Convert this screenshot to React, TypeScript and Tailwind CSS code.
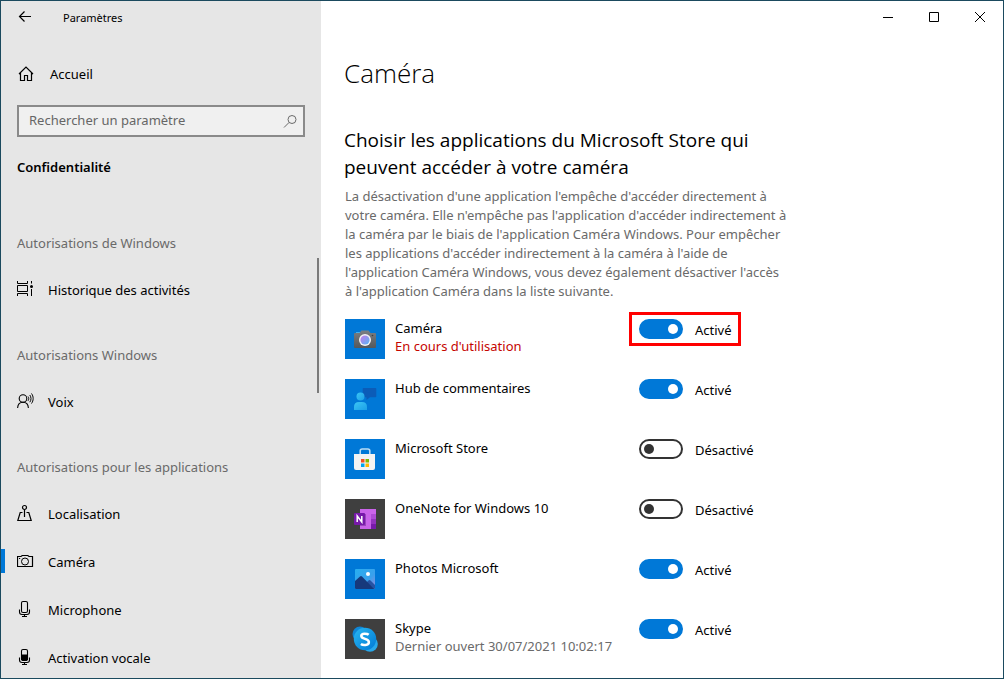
import { useState } from "react";
import type { ReactNode } from "react";
import { clsx } from "clsx";

interface IconProps {
  children: ReactNode;
}

function LineIcon({ children }: IconProps) {
  return (
    <svg
      className="h-[18px] w-[18px] shrink-0"
      viewBox="0 0 18 18"
      fill="none"
      stroke="currentColor"
      strokeWidth="1"
      aria-hidden="true"
    >
      {children}
    </svg>
  );
}

function AppTile({ children, dark = false }: IconProps & { dark?: boolean }) {
  return (
    <svg
      className={clsx("h-10 w-10 shrink-0", dark ? "bg-[#3f3f3f]" : "bg-[#0078d7]")}
      viewBox="0 0 40 40"
      aria-hidden="true"
    >
      {children}
    </svg>
  );
}

const HomeIcon = () => (
  <LineIcon>
    <path d="M2 10 9 3l7 7M3.5 9v7.5h4v-5h3v5h4V9" strokeWidth="1.2" />
  </LineIcon>
);

const HistoryIcon = () => (
  <LineIcon>
    <path d="M.5 1v2.5h10V1M.5 16v-2.5h10V16M.5 5.5h10v6H.5zM14.5 1v2.5M14.5 9v7" />
    <circle cx="14.5" cy="6.5" r="1.5" fill="currentColor" stroke="none" />
  </LineIcon>
);

const VoiceIcon = () => (
  <LineIcon>
    <circle cx="6" cy="6.5" r="3.8" strokeWidth="1.1" />
    <path d="M.6 16c.2-3.4 2.3-5.7 5.400-5.700s5.200 2.300 5.400 5.700" strokeWidth="1.1" />
    <path d="M11 4.500c1 1.300 1 3 0 4.300M12.800 3c1.600 2.200 1.600 5 0 7.200M14.500 1.500c2.200 3 2.200 7 0 10" />
  </LineIcon>
);

const LocationIcon = () => (
  <LineIcon>
    <circle cx="7.500" cy="3.500" r="2" strokeWidth="1.2" />
    <path d="M7.500 5.500V13M5.500 8.500H3.200L.8 16.500h13.400L11.800 8.500H9.500" strokeWidth="1.2" />
  </LineIcon>
);

const CameraIcon = () => (
  <LineIcon>
    <path d="M.5 4.500h3.500l1.200-1h5.600l1.200 1h3.500v10H.5z" strokeWidth="1.2" />
    <circle cx="8" cy="9.500" r="3.500" />
    <path d="M2 6.500h1.200" />
  </LineIcon>
);

const MicIcon = ({ filled = false }: { filled?: boolean }) => (
  <LineIcon>
    <rect x="4.500" y="1.500" width="6" height="11" rx="1.500" strokeWidth="1.100" />
    {filled && <path d="M4.500 7h6v4.500l-1 1h-4l-1-1z" fill="currentColor" />}
    <path d="M2.500 9.500v2.500c0 1.500 1 2.500 2.500 2.500h5c1.500 0 2.500-1 2.500-2.500V9.500M7.500 14.500v2M5 16.500h5" strokeWidth="1.100" />
  </LineIcon>
);

const CameraTile = () => (
  <AppTile>
    <defs>
      <linearGradient id="cam-body" x1="0" y1="0" x2="0" y2="1">
        <stop offset="0" stopColor="#7b7f83" />
        <stop offset="1" stopColor="#55585b" />
      </linearGradient>
      <linearGradient id="cam-lens" x1="0" y1="0" x2="1" y2="1">
        <stop offset="0" stopColor="#c77bea" />
        <stop offset="1" stopColor="#55b6f5" />
      </linearGradient>
    </defs>
    <path d="M11 14.500V13h4v1.500z" fill="#3fb0f0" />
    <path d="M10 14h4.500l2-2.500h7l2 2.500H30q1 0 1 1v13q0 1-1 1H10q-1 0-1-1V15q0-1 1-1z" fill="url(#cam-body)" />
    <circle cx="20" cy="21" r="6" fill="#f4f4f6" />
    <circle cx="20" cy="21" r="4.600" fill="url(#cam-lens)" />
    <circle cx="27.500" cy="16.500" r=".8" fill="#3c3f42" />
  </AppTile>
);

const FeedbackTile = () => (
  <AppTile>
    <defs>
      <linearGradient id="hub-user" x1="0" y1="0" x2="1" y2="1">
        <stop offset="0" stopColor="#3cc5f4" />
        <stop offset="1" stopColor="#1ba0e8" />
      </linearGradient>
    </defs>
    <path d="M18.500 9h12q.8 0 .8.800v7.700q0 .8-.8.800h-5.500L21.500 21v-2.700h-3q-.8 0-.8-.8V9.800q0-.8.8-.8z" fill="#0b5cb8" />
    <circle cx="15.500" cy="17.500" r="4" fill="url(#hub-user)" />
    <path d="M9 31v-3q0-5 5-5h3q5 0 5 5v3z" fill="url(#hub-user)" />
  </AppTile>
);

const StoreTile = () => (
  <AppTile>
    <path d="M15.200 16v-4q0-2 2-2h5.600q2 0 2 2v4" fill="none" stroke="#b9dcf5" strokeWidth="1.600" />
    <path d="M9 15h21v14q0 2-2 2H11q-2 0-2-2z" fill="#f3f3f3" />
    <path d="M16 20h3.500v3.500H16z" fill="#f25022" />
    <path d="M20.500 20H24v3.500h-3.500z" fill="#7fba00" />
    <path d="M16 24.500h3.500V28H16z" fill="#00a4ef" />
    <path d="M20.500 24.500H24V28h-3.500z" fill="#ffb900" />
  </AppTile>
);

const OneNoteTile = () => (
  <AppTile dark>
    <path d="M15 10h16v20H15z" fill="#ca64ea" />
    <path d="M26 15h5v5h-5z" fill="#ae4bd5" />
    <path d="M26 20h5v5h-5z" fill="#9332bf" />
    <path d="M26 25h5v5h-5z" fill="#7719aa" />
    <path d="M15 15h6v12h-6z" fill="#9a45bd" />
    <rect x="9" y="14" width="11" height="12" rx="1" fill="#7719aa" />
    <path d="M12.200 23v-6l4.600 6v-6" fill="none" stroke="#fff" strokeWidth="1.500" />
  </AppTile>
);

const PhotosTile = () => (
  <AppTile>
    <defs>
      <linearGradient id="photo-sky" x1="0" y1="0" x2="1" y2="1">
        <stop offset="0" stopColor="#27aef0" />
        <stop offset=".6" stopColor="#3aa0ec" />
        <stop offset="1" stopColor="#9a86dc" />
      </linearGradient>
    </defs>
    <rect x="10" y="10" width="20" height="20" rx="1" fill="url(#photo-sky)" />
    <path d="M19 26l4.500-4.500q1-.8 2 0L30 26v3q0 1-1 1H19z" fill="#2553a4" />
    <path d="M10 22l5-4.500q1-.8 2 0L29 30H11q-1 0-1-1z" fill="#17397c" />
    <circle cx="23" cy="15" r="2" fill="#fff" />
  </AppTile>
);

const SkypeTile = () => (
  <AppTile dark>
    <defs>
      <linearGradient id="skype-blue" x1="0" y1="0" x2="1" y2="1">
        <stop offset="0" stopColor="#29b8f2" />
        <stop offset="1" stopColor="#0078d4" />
      </linearGradient>
    </defs>
    <circle cx="15" cy="15" r="7.500" fill="#0f86d6" />
    <circle cx="25" cy="25" r="7.800" fill="#28a8ea" />
    <circle cx="20" cy="20" r="11.200" fill="url(#skype-blue)" />
    <path
      d="M23.700 15.800C22.500 14.800 16.300 13.700 16.300 17c0 3.600 7.600 2.200 7.600 6 0 3.800-6.300 3.300-8 2"
      fill="none"
      stroke="#fff"
      strokeWidth="2.500"
    />
  </AppTile>
);

const sections = [
  {
    title: "Autorisations de Windows",
    items: [{ label: "Historique des activités", icon: <HistoryIcon /> }],
  },
  {
    title: "Autorisations Windows",
    items: [{ label: "Voix", icon: <VoiceIcon /> }],
  },
  {
    title: "Autorisations pour les applications",
    items: [
      { label: "Localisation", icon: <LocationIcon /> },
      { label: "Caméra", icon: <CameraIcon />, active: true },
      { label: "Microphone", icon: <MicIcon /> },
      { label: "Activation vocale", icon: <MicIcon filled /> },
    ],
  },
];

interface AppEntry {
  id: string;
  name: string;
  tile: ReactNode;
  enabled: boolean;
  note?: string;
  inUse?: boolean;
  highlighted?: boolean;
}

const apps: AppEntry[] = [
  { id: "camera", name: "Caméra", tile: <CameraTile />, enabled: true, note: "En cours d'utilisation", inUse: true, highlighted: true },
  { id: "feedback", name: "Hub de commentaires", tile: <FeedbackTile />, enabled: true },
  { id: "store", name: "Microsoft Store", tile: <StoreTile />, enabled: false },
  { id: "onenote", name: "OneNote for Windows 10", tile: <OneNoteTile />, enabled: false },
  { id: "photos", name: "Photos Microsoft", tile: <PhotosTile />, enabled: true },
  { id: "skype", name: "Skype", tile: <SkypeTile />, enabled: true, note: "Dernier ouvert 30/07/2021 10:02:17" },
];

function NavItem({ icon, label, active = false }: { icon: ReactNode; label: string; active?: boolean }) {
  return (
    <a href="#" className="relative flex h-12 items-center gap-[13px] pl-4" aria-current={active ? "page" : undefined}>
      {active && <span className="absolute left-0 h-6 w-1 bg-[#0078d7]" />}
      {icon}
      <span className="pt-1">{label}</span>
    </a>
  );
}

function Sidebar() {
  return (
    <aside className="relative w-80 shrink-0 overflow-hidden bg-[#e6e6e6]">
      <div className="flex h-8 items-center">
        <button type="button" aria-label="Retour" className="flex w-12 justify-center">
          <svg className="h-4 w-4" viewBox="0 0 16 16" fill="none" stroke="currentColor" strokeWidth="1.2">
            <path d="M14 7.500H2.500M7.500 2.500l-5 5 5 5" />
          </svg>
        </button>
        <span className="pl-[14px] pt-0.5 text-[11px]">Paramètres</span>
      </div>

      <a href="#" className="mt-4 flex h-12 items-center gap-[15px] pl-4">
        <HomeIcon />
        <span className="pt-1">Accueil</span>
      </a>

      <div className="mx-4 mt-2 flex h-8 items-center border-2 border-[#8a8a8a] bg-[#f0f0f0]">
        <input
          type="search"
          aria-label="Rechercher un paramètre"
          placeholder="Rechercher un paramètre"
          className="min-w-0 flex-1 bg-transparent pl-[10px] outline-none placeholder:text-[#666666]"
        />
        <svg className="mr-1 h-5 w-4" viewBox="0 0 16 20" fill="none" stroke="#6b6b6b" strokeWidth="1" aria-hidden="true">
          <circle cx="9" cy="8.500" r="4" />
          <path d="M6 11.500 1 16.500" />
        </svg>
      </div>

      <h2 className="mt-4 pl-4 font-semibold leading-7">Confidentialité</h2>

      <nav className="mt-5">
        {sections.map((section) => (
          <section key={section.title}>
            <h3 className="flex h-16 items-center pl-4 pt-[22px] text-[#6a6a6a]">{section.title}</h3>
            {section.items.map((item) => (
              <NavItem key={item.label} {...item} />
            ))}
          </section>
        ))}
      </nav>

      {/* Scroll thumb */}
      <div className="absolute right-0.5 top-[257px] h-[135px] w-0.5 bg-[#7a7a7a]" />
    </aside>
  );
}

function WindowControls() {
  return (
    <div className="flex h-8 justify-end">
      <button type="button" aria-label="Réduire" className="flex w-[46px] items-center justify-center">
        <svg className="h-[11px] w-[11px]" viewBox="0 0 11 11" stroke="currentColor">
          <path d="M0 5.500h10" />
        </svg>
      </button>
      <button type="button" aria-label="Agrandir" className="flex w-[46px] items-center justify-center">
        <svg className="h-[11px] w-[11px]" viewBox="0 0 11 11" fill="none" stroke="currentColor">
          <path d="M.5.5h9v9h-9z" />
        </svg>
      </button>
      <button type="button" aria-label="Fermer" className="flex w-[46px] items-center justify-center">
        <svg className="h-[11px] w-[11px]" viewBox="0 0 11 11" stroke="currentColor">
          <path d="m0 0 10 10M10 0 0 10" />
        </svg>
      </button>
    </div>
  );
}

function AppRow({ app }: { app: AppEntry }) {
  const [enabled, setEnabled] = useState(app.enabled);

  return (
    <li className="flex h-[60px] items-start">
      <div className="flex w-[294px] shrink-0 gap-[10px]">
        {app.tile}
        <label htmlFor={app.id} className="whitespace-nowrap leading-[18px]">
          {app.name}
          {app.note && (
            <span className={clsx("block", app.inUse ? "text-[#c50500]" : "text-[#6a6a6a]")}>{app.note}</span>
          )}
        </label>
      </div>
      <div className="relative flex h-5 items-center gap-3">
        <input
          id={app.id}
          type="checkbox"
          role="switch"
          checked={enabled}
          onChange={(e) => setEnabled(e.target.checked)}
          className="flex h-5 w-11 appearance-none items-center rounded-full border-2 border-[#333333] px-[3px] before:h-[10px] before:w-[10px] before:rounded-full before:bg-[#333333] checked:justify-end checked:border-[#0078d7] checked:bg-[#0078d7] checked:before:bg-white"
        />
        <span className="pt-1">{enabled ? "Activé" : "Désactivé"}</span>
        {app.highlighted && (
          <span className="pointer-events-none absolute -inset-y-[7px] -left-[10px] w-28 border-3 border-[#ff0000]" />
        )}
      </div>
    </li>
  );
}

export default function App() {
  return (
    <div className="flex h-screen overflow-hidden border border-[#1b4a5e] bg-white font-['Noto_Sans','Open_Sans',sans-serif] text-[13px] text-black">
      <Sidebar />
      <main className="min-w-0 flex-1 overflow-hidden">
        <WindowControls />
        <div className="pl-[23px] pr-4 font-['Open_Sans','Noto_Sans',sans-serif]">
          <h1 className="mt-5 text-[26px] font-light leading-10">Caméra</h1>
          <h2 className="mt-[34px] text-[19px] leading-[27px]">
            Choisir les applications du Microsoft Store qui
            <br />
            peuvent accéder à votre caméra
          </h2>
          <div className="pl-px font-['Noto_Sans','Open_Sans',sans-serif]">
            <p className="mt-1.5 leading-[19px] text-[#6a6a6a]">
              La désactivation d'une application l'empêche d'accéder directement à
              <br />
              votre caméra. Elle n'empêche pas l'application d'accéder indirectement à
              <br />
              la caméra par le biais de l'application Caméra Windows. Pour empêcher
              <br />
              les applications d'accéder indirectement à la caméra à l'aide de
              <br />
              l'application Caméra Windows, vous devez également désactiver l'accès
              <br />
              à l'application Caméra dans la liste suivante.
            </p>
            <ul className="mt-[18px]">
              {apps.map((app) => (
                <AppRow key={app.id} app={app} />
              ))}
            </ul>
          </div>
        </div>
      </main>
    </div>
  );
}
